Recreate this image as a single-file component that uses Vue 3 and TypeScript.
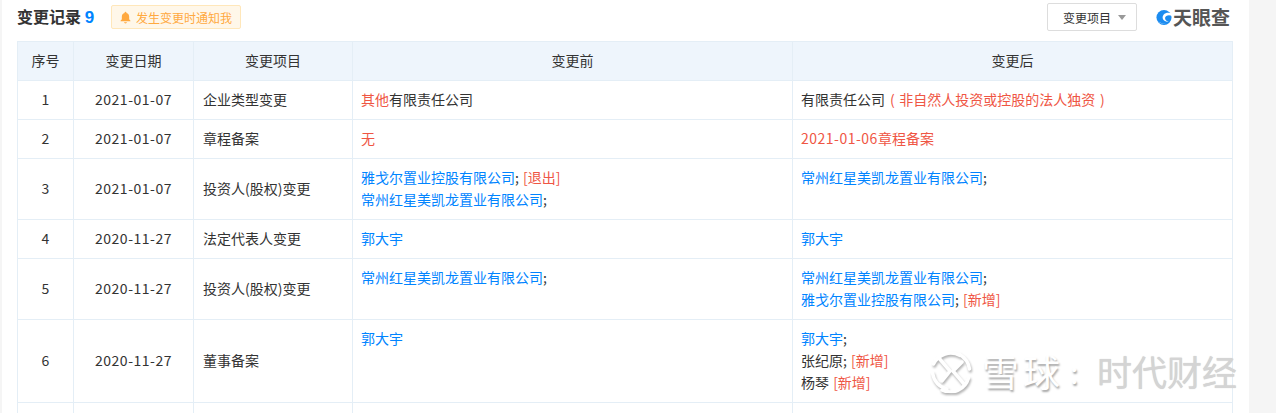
<script setup lang="ts">
interface Seg { t: string; c?: string }
interface Row { n: number; d: string; item: string; before: Seg[][]; after: Seg[][]; cls: string }
const L = 'link', R = 'red'
const A = '雅戈尔置业控股有限公司', B = '常州红星美凯龙置业有限公司', G = '郭大宇'
const rows: Row[] = [
  { n: 1, d: '2021-01-07', item: '企业类型变更', cls: 'h39', before: [[{ t: '其他', c: R }, { t: '有限责任公司' }]], after: [[{ t: '有限责任公司' }, { t: '( 非自然人投资或控股的法人独资 )', c: 'red paren' }]] },
  { n: 2, d: '2021-01-07', item: '章程备案', cls: 'h39', before: [[{ t: '无', c: R }]], after: [[{ t: '2021-01-06', c: 'red num' }, { t: '章程备案', c: R }]] },
  { n: 3, d: '2021-01-07', item: '投资人(股权)变更', cls: 'h61', before: [[{ t: A, c: L }, { t: '; ' }, { t: '[退出]', c: R }], [{ t: B, c: L }, { t: ';' }]], after: [[{ t: B, c: L }, { t: ';' }]] },
  { n: 4, d: '2020-11-27', item: '法定代表人变更', cls: 'h39', before: [[{ t: G, c: L }]], after: [[{ t: G, c: L }]] },
  { n: 5, d: '2020-11-27', item: '投资人(股权)变更', cls: 'h61', before: [[{ t: B, c: L }, { t: ';' }]], after: [[{ t: B, c: L }, { t: ';' }], [{ t: A, c: L }, { t: '; ' }, { t: '[新增]', c: R }]] },
  { n: 6, d: '2020-11-27', item: '董事备案', cls: 'h83', before: [[{ t: G, c: L }]], after: [[{ t: G, c: L }, { t: ';' }], [{ t: '张纪原; ' }, { t: '[新增]', c: R }], [{ t: '杨琴 ' }, { t: '[新增]', c: R }]] }
]
</script>

<template>
  <div class="page">
    <main class="panel">
      <header class="bar">
        <div class="heading">
          <h2 class="title">变更记录 <span class="count">9</span></h2>
          <div class="notify">
            <svg class="bell" viewBox="0 0 12 14" width="11" height="13"><path fill="#ffa940" d="M6 0.6c.6 0 1 .4 1 1v.5c2 .5 3 2.1 3 4.1v2.6l1.4 1.7v.7H.6v-.7L2 8.800V6.200c0-2 1-3.600 3-4.100v-.5c0-.6.400-1 1-1zM4.400 12.200h3.200c-.1.800-.8 1.300-1.600 1.300s-1.500-.5-1.600-1.300z"/></svg>
            <span>发生变更时通知我</span>
          </div>
        </div>
        <div class="tools">
          <div class="select"><span>变更项目</span><i class="caret"></i></div>
          <div class="logo">
            <svg viewBox="0 0 18 18" width="17" height="17">
              <circle cx="9" cy="9" r="8.500" fill="#1c8cf0"/>
              <path fill="#fff" d="M18 4.500C14.500 3.200 10.500 3.500 8.500 6c-1.600 2-1.400 4.800.6 6.500 1.500 1.200 3.600 1.500 5.400.7-1.600 0-3-.6-3.800-1.800-.9-1.500-.5-3.200.9-4.100 1.700-1 4.200-1 6.400 0z"/>
              <path fill="#fff" d="M2.500 13.500c2 2 5.500 3.200 8.500 2.800-3-.2-5.800-1.200-8.500-2.800z"/>
            </svg>
            <span>天眼查</span>
          </div>
        </div>
      </header>

      <table class="grid">
        <colgroup>
          <col class="c1" /><col class="c2" /><col class="c3" /><col class="c4" /><col class="c5" />
        </colgroup>
        <thead>
          <tr><th><span class="up">序号</span></th><th><span class="up">变更日期</span></th><th><span class="up">变更项目</span></th><th><span class="up">变更前</span></th><th><span class="up">变更后</span></th></tr>
        </thead>
        <tbody>
          <tr v-for="r in rows" :key="r.n" :class="r.cls">
            <td class="mid">{{ r.n }}</td>
            <td class="mid num">{{ r.d }}</td>
            <td class="item">{{ r.item }}</td>
            <td class="multi">
              <div v-for="(l, i) in r.before" :key="i" class="line"><span v-for="(s, j) in l" :key="j" :class="s.c">{{ s.t }}</span></div>
            </td>
            <td class="multi">
              <div v-for="(l, i) in r.after" :key="i" class="line"><span v-for="(s, j) in l" :key="j" :class="s.c">{{ s.t }}</span></div>
            </td>
          </tr>
          <tr class="h39"><td></td><td></td><td></td><td></td><td></td></tr>
        </tbody>
      </table>
    </main>

    <div class="mark">
      <svg viewBox="0 0 44 44" width="44" height="44">
        <g fill="none" stroke="#fff" stroke-width="3.500" stroke-linecap="round">
          <path d="M31 6.500A19 19 0 0 0 4.500 15"/>
          <path d="M3.500 24C5 32 10 38 18 40"/>
          <path d="M13 41A19 19 0 0 0 39.500 29"/>
          <path d="M40.500 20C39.500 12 35 8 30 5"/>
          <path d="M9 8L21 22L13 32"/>
          <path d="M33 13L24 22L35 35"/>
        </g>
      </svg>
      <span class="mark-a">雪球</span><span class="mark-c">:</span><span class="mark-b">时代财经</span>
    </div>
  </div>
</template>

<style>
html, body { margin: 0; background: #f5f5f5; }
</style>

<style scoped>
.page {
  position: relative;
  width: 1276px;
  height: 413px;
  overflow: hidden;
  background: #f5f5f5;
  font-family: "Noto Sans CJK SC", "Liberation Sans", sans-serif;
  color: #333;
  font-size: 14px;
}
.panel {
  box-sizing: border-box;
  width: 1247px;
  height: 413px;
  margin-left: 2px;
  padding: 0 16px 0 15px;
  background: #fff;
}
.bar {
  display: flex;
  justify-content: space-between;
  align-items: center;
  height: 41px;
  padding-bottom: 7px;
  box-sizing: border-box;
}
.heading { display: flex; align-items: center; gap: 17px; }
.title { margin: 0 0 1px; font-size: 16px; font-weight: 700; line-height: 24px; color: #333; }
.count { color: #0084ff; font-family: "Liberation Sans", sans-serif; font-size: 17px; }
.notify {
  display: flex;
  align-items: center;
  gap: 5px;
  box-sizing: border-box;
  height: 24px;
  padding: 0 8px;
  background: #fff7e9;
  border: 1px solid #ffe7ba;
  border-radius: 2px;
  color: #ffa940;
  font-size: 12px;
}
.tools { display: flex; align-items: center; gap: 19px; margin-right: 1px; }
.select {
  display: flex;
  align-items: center;
  gap: 7px;
  box-sizing: border-box;
  width: 90px;
  height: 28px;
  padding-left: 15px;
  border: 1px solid #ddd;
  border-radius: 2px;
  font-size: 12px;
  color: #333;
}
.caret {
  width: 0;
  height: 0;
  border-left: 4px solid transparent;
  border-right: 4px solid transparent;
  border-top: 5px solid #999;
}
.logo {
  display: flex;
  align-items: center;
  gap: 1px;
  font-size: 19px;
  font-weight: 700;
  color: #555;
  line-height: 20px;
  width: 74px;
  white-space: nowrap;
  margin-right: 2px;
}
.grid {
  width: 1215px;
  border-collapse: collapse;
  table-layout: fixed;
}
.c1 { width: 56px; }
.c2 { width: 120px; }
.c3 { width: 159px; }
.c4 { width: 440px; }
.c5 { width: 440px; }
th, td { border: 1px solid #e4eef6; padding: 0; box-sizing: border-box; }
th {
  height: 39px;
  background: #eef5fc;
  font-weight: 400;
  font-size: 14px;
  color: #333;
  line-height: 20px;
}
.up { display: inline-block; padding-bottom: 2px; }
td { padding: 0 8px 2px 8px; line-height: 22px; color: #333; }
.mid { text-align: center; padding: 0 0 2px; }
.item { padding-left: 9px; }
.num { letter-spacing: 0.5px; }
.h39 { height: 39px; }
.h61 { height: 61px; }
.h83 { height: 83px; }
.multi { vertical-align: top; padding-top: 7px; padding-bottom: 0; }
.line { white-space: pre; height: 22px; word-spacing: 1px; }
.link { color: #0084ff; }
.red { color: #ef5644; }
.paren { padding-left: 5px; word-spacing: 1.5px; }
.mark {
  position: absolute;
  left: 929px;
  top: 349px;
  display: flex;
  align-items: center;
  font-size: 37px;
  font-weight: 400;
  line-height: 44px;
  color: #fff;
  text-shadow: 1px 2px 2px rgba(0, 0, 0, 0.35);
}
.mark svg { filter: drop-shadow(1px 2px 1px rgba(0, 0, 0, 0.3)); }
.mark-a { margin-left: 9px; letter-spacing: 4px; }
.mark-c { margin-left: 6px; width: 27px; font-size: 30px; }
.mark-b { font-size: 35px; color: #d4d4d4; text-shadow: 0 0 1px #ccc; }
</style>
